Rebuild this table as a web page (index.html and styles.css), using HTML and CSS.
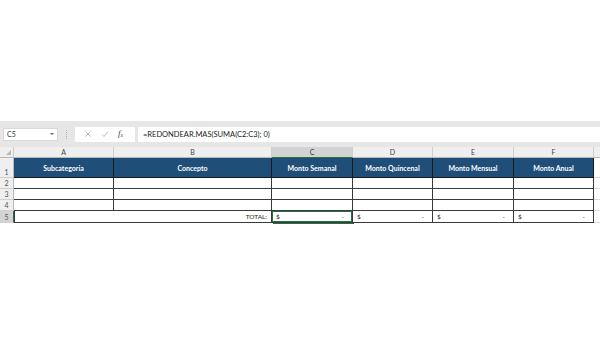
FILE: index.html
```html
<!DOCTYPE html>
<html>
<head>
<meta charset="utf-8">
<link rel="stylesheet" href="styles.css">
</head>
<body>
<div class="page">
  <div class="fbar">
    <div class="namebox"><span class="nb-text">C5</span><span class="nb-arrow"></span></div>
    <div class="sep"></div>
    <div class="btns">
      <svg class="ico" width="8" height="8" viewBox="0 0 8 8"><path d="M1.5 1.5 L6.5 6.5 M6.5 1.5 L1.5 6.5" stroke="#b5b5b5" stroke-width="0.9" fill="none"/></svg>
      <svg class="ico" width="8" height="8" viewBox="0 0 8 8"><path d="M1 4.5 L3 6.5 L7 1.5" stroke="#b5b5b5" stroke-width="0.9" fill="none"/></svg>
      <span class="fx">f<sub>x</sub></span>
    </div>
    <div class="formula">=REDONDEAR.MAS(SUMA(C2:C3); 0)</div>
  </div>
  <div class="grid">
    <div class="corner"><span class="tri"></span></div>
    <div class="ch">A</div>
    <div class="ch">B</div>
    <div class="ch sel">C</div>
    <div class="ch">D</div>
    <div class="ch">E</div>
    <div class="ch">F</div>
    <div class="ch last"></div>

    <div class="rh tall">1</div>
    <div class="hd">Subcategoria</div>
    <div class="hd">Concepto</div>
    <div class="hd">Monto Semanal</div>
    <div class="hd">Monto Quincenal</div>
    <div class="hd">Monto Mensual</div>
    <div class="hd">Monto Anual</div>
    <div class="gl"></div>

    <div class="rh">2</div>
    <div class="dc"></div><div class="dc"></div><div class="dc"></div><div class="dc"></div><div class="dc"></div><div class="dc"></div>
    <div class="gl"></div>

    <div class="rh">3</div>
    <div class="dc"></div><div class="dc"></div><div class="dc"></div><div class="dc"></div><div class="dc"></div><div class="dc"></div>
    <div class="gl"></div>

    <div class="rh">4</div>
    <div class="dc"></div><div class="dc"></div><div class="dc"></div><div class="dc"></div><div class="dc"></div><div class="dc"></div>
    <div class="gl"></div>

    <div class="rh rsel">5</div>
    <div class="dc total">TOTAL:</div>
    <div class="dc money active"><span>$</span><span>-</span></div>
    <div class="dc money"><span>$</span><span>-</span></div>
    <div class="dc money"><span>$</span><span>-</span></div>
    <div class="dc money"><span>$</span><span>-</span></div>
    <div class="gl"></div>
  </div>
</div>
</body>
</html>
```
FILE: styles.css
```css
* { box-sizing: border-box; }
html, body { margin: 0; padding: 0; background: #ffffff; }
body { font-family: Lato, "Liberation Sans", sans-serif; width: 600px; height: 347px; overflow: hidden; }
.page { padding-top: 121px; }

.fbar {
  height: 26px;
  background: #e6e6e6;
  display: flex;
  align-items: center;
  padding-left: 3px;
}
.namebox {
  width: 55px;
  height: 13px;
  background: #fff;
  border: 1px solid #d9d9d9;
  display: flex;
  align-items: center;
  justify-content: space-between;
  padding: 0 3px 0 3px;
  font-size: 7px;
  color: #333;
}
.nb-arrow {
  width: 0; height: 0;
  border-left: 2px solid transparent;
  border-right: 2px solid transparent;
  border-top: 2px solid #666;
}
.sep {
  width: 1px;
  height: 9px;
  margin: 0 8px 0 8px;
  border-left: 1px dotted #b0b0b0;
}
.btns {
  width: 60px;
  height: 15px;
  background: #fff;
  display: flex;
  align-items: center;
  padding-left: 9px;
  gap: 9px;
}
.fx {
  font-family: "Liberation Serif", serif;
  font-style: italic;
  font-size: 9px;
  color: #444;
  line-height: 1;
}
.fx sub { font-size: 5.5px; vertical-align: -1px; }
.formula {
  flex: 1;
  height: 15px;
  margin-left: 3px;
  background: #fff;
  font-size: 7.5px;
  color: #222;
  display: flex;
  align-items: center;
  padding-left: 5px;
}

.grid {
  display: grid;
  grid-template-columns: 14px 100px 158px 81px 80px 81px 80px 6px;
  grid-template-rows: 11px 20px 11px 11px 11px 12px;
  font-size: 6.5px;
}
.grid > div { display: flex; align-items: center; justify-content: center; }

.corner {
  background: #efefef;
  border-right: 1px solid #cfcfcf;
  border-bottom: 1px solid #b8b8b8;
  position: relative;
}
.tri {
  position: absolute; right: 2px; bottom: 2px;
  width: 0; height: 0;
  border-left: 5px solid transparent;
  border-bottom: 5px solid #b8b8b8;
}
.ch {
  background: #efefef;
  color: #444;
  font-size: 7px;
  border-right: 1px solid #cfcfcf;
  border-bottom: 1px solid #b8b8b8;
}
.ch.sel { background: #d3d3d3; border-bottom: 1px solid #217346; color: #333; }
.ch.last { border-right: none; }

.rh {
  background: #efefef;
  color: #555;
  font-size: 7px;
  border-right: 1px solid #b8b8b8;
  border-bottom: 1px solid #cfcfcf;
}
.rh.tall { align-items: flex-end !important; padding-bottom: 1px; }
.rh.rsel { background: #d3d3d3; border-right: 1px solid #217346; }

.hd {
  background: #1f4e78;
  color: #fff;
  font-weight: bold;
  font-size: 7px;
  border-right: 1px solid #1a1a1a;
  border-bottom: 1px solid #1a1a1a;
}
.dc {
  background: #fff;
  border-right: 1px solid #3a3a3a;
  border-bottom: 1px solid #3a3a3a;
  color: #222;
}
.gl {
  border-bottom: 1px solid #dadada;
}
.total {
  grid-column: span 2;
  justify-content: flex-end !important;
  padding-right: 4px;
  border-left: 1px solid #3a3a3a;
}
.money {
  justify-content: space-between !important;
  padding: 0 8px 0 4px;
}
.money.active { box-shadow: inset 0 0 0 1px #217346, 1px 1px 0 0 #217346; }
```
